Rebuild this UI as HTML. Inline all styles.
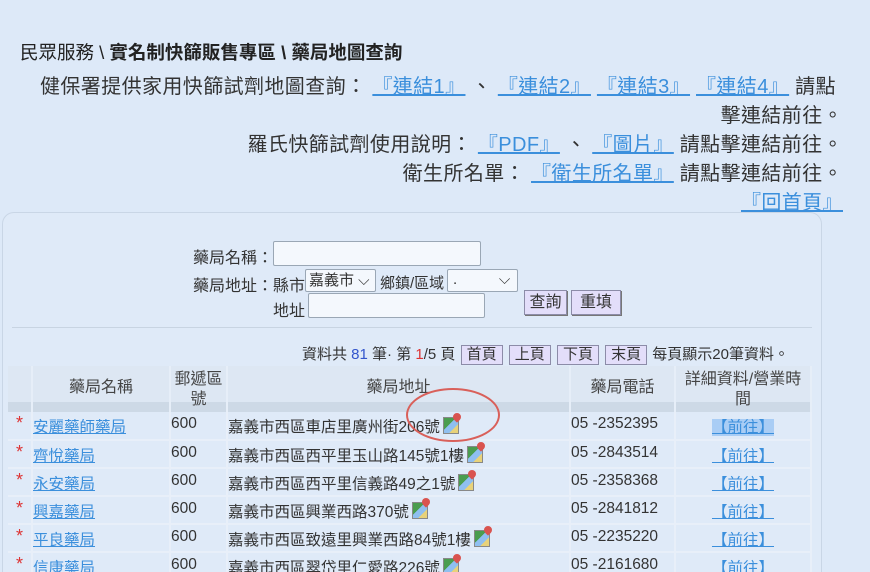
<!DOCTYPE html>
<html><head><meta charset="utf-8"><style>
*{margin:0;padding:0;box-sizing:border-box}
html,body{width:870px;height:572px;overflow:hidden}
body{background:#dde9f8;font-family:"Liberation Sans","Noto Sans CJK TC",sans-serif;color:#333;position:relative}
.a{position:absolute;white-space:nowrap}
a{color:#3b8fdc;text-decoration:underline}
.r{text-align:right;right:27px}
.bc{font-size:18.5px;left:20px;top:39px;color:#222}
.l{font-size:20px;letter-spacing:0.4px}
.panel{position:absolute;left:2px;top:212px;width:820px;height:420px;border:1px solid #c9d6e6;border-radius:12px;background:#dfeaf8}
.f{font-size:16px}
.in{position:absolute;background:#f4f8fd;border:1px solid #9aa7b5;border-radius:2px}
.btn{position:absolute;background:#e3defa;border:1px solid #8c8ca8;font-size:16px;text-align:center;line-height:23px;box-shadow:1px 1px 0 #777}
.pb{display:inline-block;background:#e3defa;border:1px solid #8c8ca8;padding:0 5px;line-height:18px;margin:0 1px}
table{position:absolute;left:8px;top:366px;width:804px;border-collapse:collapse;font-size:15.5px}
th{font-weight:normal;background:linear-gradient(#dde7f3 0,#dde7f3 36px,#cdd9e6 36px);height:46px;border-right:2px solid #e6eef8;vertical-align:top;padding-top:4px;line-height:20px;color:#444;font-size:16px}
td{height:28px;border-bottom:2px solid #e8eff9;border-right:2px solid #e8eff9;vertical-align:top;padding-top:3px;color:#333}
.st{color:#d33;text-align:center;font-size:18px;padding-top:1px}
.ic{display:inline-block;width:16px;height:17px;vertical-align:-2px;margin-left:3px;background:linear-gradient(135deg,#4a9d4f 40%,#8fbff0 40%,#8fbff0 70%,#e8d27a 70%);border:1px solid #888;position:relative}
.ic:after{content:"";position:absolute;right:-3px;top:-5px;width:8px;height:8px;border-radius:50% 50% 50% 0;transform:rotate(-45deg);background:#d9534f}
</style></head><body>
<div class="a bc">民眾服務 \ <b>實名制快篩販售專區 \ 藥局地圖查詢</b></div>
<div class="a l" style="left:40px;top:70px">健保署提供家用快篩試劑地圖查詢： <a>『連結1』</a> 、 <a>『連結2』</a> <a>『連結3』</a> <a>『連結4』</a> 請點</div>
<div class="a l r" style="top:99px">擊連結前往。</div>
<div class="a l r" style="top:128px">羅氏快篩試劑使用說明： <a>『PDF』</a> 、 <a>『圖片』</a> 請點擊連結前往。</div>
<div class="a l r" style="top:157px">衛生所名單： <a>『衛生所名單』</a> 請點擊連結前往。</div>
<div class="a l r" style="top:186px"><a>『回首頁』</a></div>
<div class="panel"></div>
<div class="a f" style="left:193px;top:244px">藥局名稱：</div>
<div class="in" style="left:273px;top:241px;width:208px;height:25px"></div>
<div class="a f" style="left:193px;top:272px">藥局地址：縣市</div>
<div class="in" style="left:305px;top:269px;width:71px;height:23px;font-size:15px;line-height:21px;padding-left:3px">嘉義市 ⌵</div>
<div class="a f" style="left:380px;top:272px;font-size:15px">鄉鎮/區域</div>
<div class="in" style="left:447px;top:269px;width:71px;height:23px;font-size:15px;line-height:19px;padding-left:5px">.&nbsp;&nbsp;&nbsp;&nbsp;&nbsp;&nbsp;&nbsp;&nbsp;&nbsp;&nbsp;⌵</div>
<div class="a f" style="left:273px;top:297px">地址</div>
<div class="in" style="left:308px;top:293px;width:177px;height:25px"></div>
<div class="btn" style="left:524px;top:290px;width:43px;height:25px">查詢</div>
<div class="btn" style="left:571px;top:290px;width:50px;height:25px">重填</div>
<div class="a" style="left:12px;top:327px;width:800px;border-top:1px solid #c8d4e2"></div>
<div class="a f" style="left:302px;top:343px;font-size:15px">資料共 <span style="color:#3355cc">81</span> 筆· 第 <span style="color:#d33">1</span>/5 頁 <span class="pb">首頁</span> <span class="pb">上頁</span> <span class="pb">下頁</span> <span class="pb">末頁</span> 每頁顯示20筆資料。</div>
<table>
<tr><th style="width:24px"></th><th style="width:138px;padding-top:12px">藥局名稱</th><th style="width:57px">郵遞區<br>號</th><th style="width:343px;padding-top:12px">藥局地址</th><th style="width:105px;padding-top:12px">藥局電話</th><th>詳細資料/營業時<br>間</th></tr>
<tr><td class="st">*</td><td><a>安麗藥師藥局</a></td><td>600</td><td>嘉義市西區車店里廣州街206號<span class="ic"></span></td><td>05 -2352395</td><td style="text-align:center"><a style="background:#a9cdf5">【前往】</a></td></tr>
<tr><td class="st">*</td><td><a>齊悅藥局</a></td><td>600</td><td>嘉義市西區西平里玉山路145號1樓<span class="ic"></span></td><td>05 -2843514</td><td style="text-align:center"><a>【前往】</a></td></tr>
<tr><td class="st">*</td><td><a>永安藥局</a></td><td>600</td><td>嘉義市西區西平里信義路49之1號<span class="ic"></span></td><td>05 -2358368</td><td style="text-align:center"><a>【前往】</a></td></tr>
<tr><td class="st">*</td><td><a>興嘉藥局</a></td><td>600</td><td>嘉義市西區興業西路370號<span class="ic"></span></td><td>05 -2841812</td><td style="text-align:center"><a>【前往】</a></td></tr>
<tr><td class="st">*</td><td><a>平良藥局</a></td><td>600</td><td>嘉義市西區致遠里興業西路84號1樓<span class="ic"></span></td><td>05 -2235220</td><td style="text-align:center"><a>【前往】</a></td></tr>
<tr><td class="st">*</td><td><a>信康藥局</a></td><td>600</td><td>嘉義市西區翠岱里仁愛路226號<span class="ic"></span></td><td>05 -2161680</td><td style="text-align:center"><a>【前往】</a></td></tr>
</table>
<div class="a" style="left:406px;top:388px;width:94px;height:54px;border:2px solid #d9605a;border-radius:50%"></div>
</body></html>
